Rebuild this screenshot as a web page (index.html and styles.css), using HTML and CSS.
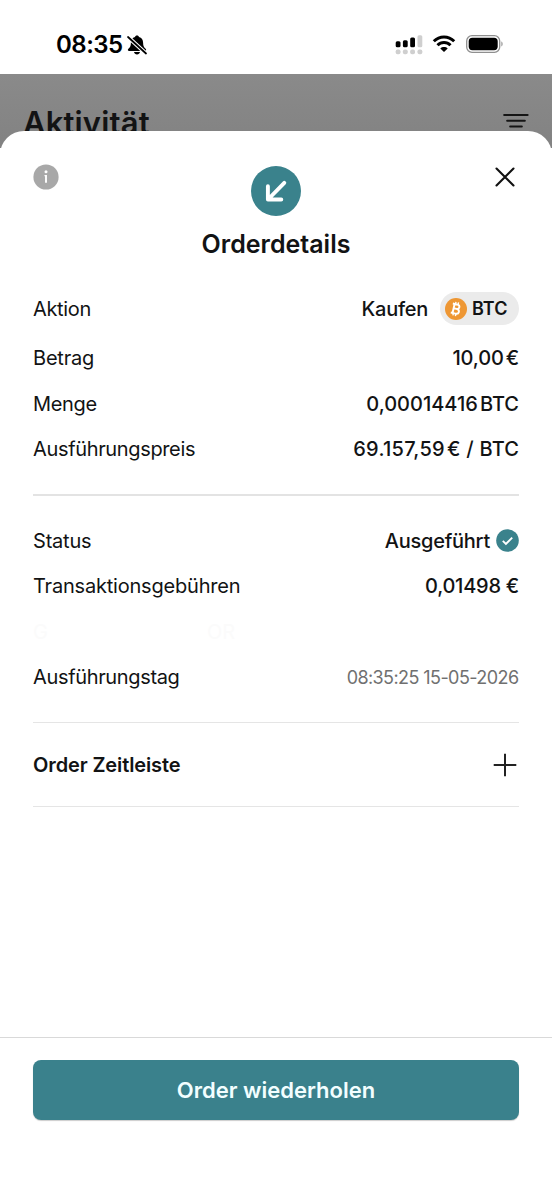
FILE: index.html
```html
<!DOCTYPE html>
<html lang="de">
<head>
<meta charset="utf-8">
<title>Orderdetails</title>
<link rel="stylesheet" href="styles.css">
</head>
<body>
<div class="phone">
  <header class="statusbar">
    <div class="clock">
      <span class="time">08:35</span>
      <svg class="bell" width="20" height="20" viewBox="0 0 20 20">
        <path d="M10 .4c-1.100 0-1.900.7-2 1.600C5.300 2.800 3.900 4.900 3.900 7.800c0 3.300-.9 4.600-2.500 6-1 .9-.6 2.200.8 2.200h15.600c1.400 0 1.800-1.300.8-2.200-1.600-1.400-2.500-2.700-2.500-6 0-2.900-1.400-5-4.100-5.800C11.900 1.100 11.100.4 10 .4z"/>
        <path d="M7 17h6c-.3 1.500-1.500 2.500-3 2.500S7.300 18.500 7 17z"/>
        <path class="bell-gap" d="M1 2l18 16.500"/>
        <path class="bell-slash" d="M1 2l18 16.500"/>
      </svg>
    </div>
    <div class="indicators">
      <svg width="28" height="20" viewBox="0 0 28 20">
        <rect x=".7" y="6.200" width="4.800" height="6" rx="1.500"/>
        <rect x="7.900" y="5.200" width="4.800" height="7" rx="1.500"/>
        <rect x="15.200" y="2.600" width="4.800" height="9.600" rx="1.500"/>
        <g fill="#cfcfcf"><rect x="22.500" y=".3" width="4.800" height="11.900" rx="1.500"/>
        <rect x=".7" y="14.500" width="4.800" height="4.800" rx="1.800"/><rect x="7.900" y="14.500" width="4.800" height="4.800" rx="1.800"/><rect x="15.200" y="14.500" width="4.800" height="4.800" rx="1.800"/><rect x="22.500" y="14.500" width="4.800" height="4.800" rx="1.800"/></g>
      </svg>
      <svg class="wifi" width="24" height="18" viewBox="0 0 24 18">
        <path class="wave" d="M1.800 6.300C7.600.5 16.400.5 22.200 6.300M5.500 10.200c3.700-3.700 9.300-3.700 13 0"/>
        <path d="M12 17l-3.700-3.500c2-1.900 5.400-1.900 7.400 0z"/>
      </svg>
      <svg class="battery" width="38" height="18" viewBox="0 0 38 18">
        <rect x=".7" y=".7" width="33" height="16.600" rx="5.300" fill="none" stroke="#8f8f8f" stroke-width="1.300"/>
        <rect x="2.700" y="2.700" width="29" height="12.600" rx="3.700"/>
        <path d="M35.400 6.600c1.600.6 1.600 4.200 0 4.800z" fill="#8f8f8f"/>
      </svg>
    </div>
  </header>

  <div class="backdrop">
    <h1 class="page-title">Aktivität</h1>
    <svg class="filter" width="26" height="16" viewBox="0 0 26 16"><path d="M1.200 2h23.400M4.200 7.700h17.600M7.200 13.500h11.600"/></svg>
  </div>

  <main class="sheet">
    <div class="sheet-head">
      <svg class="info" width="26" height="26" viewBox="0 0 26 26"><circle cx="13" cy="13" r="12.600" fill="#a8a8a8"/><circle cx="13" cy="7.800" r="1.500" fill="#fff"/><path d="M13 11v7.800" fill="none" stroke="#fff" stroke-width="1.900"/><path d="M11.500 11.600h1.500" fill="none" stroke="#fff" stroke-width="1.200"/></svg>
      <div class="heading">
        <svg width="50" height="50" viewBox="0 0 50 50"><circle cx="25" cy="25" r="25" fill="#3a828c"/><path d="M33.300 16.800L17.500 33M16.900 20.200v13.300h13.400" fill="none" stroke="#fff" stroke-width="3.900" stroke-linecap="round" stroke-linejoin="round"/></svg>
        <h2 class="title">Orderdetails</h2>
      </div>
      <svg class="close" width="20" height="20" viewBox="0 0 20 20"><path d="M1.500 1.500l17 17M18.500 1.500l-17 17"/></svg>
    </div>

    <section class="group">
      <div class="row row-action">
        <span class="label">Aktion</span>
        <div class="action"><span class="tight">Kaufen</span>
          <span class="chip">
            <svg width="22" height="22" viewBox="0 0 22 22"><circle cx="11" cy="11" r="11" fill="#ee9734"/><g transform="rotate(13 11 11)" fill="none" stroke="#fff"><path stroke-width="1.900" d="M8.500 6.400v9.200M6.700 6.400h4.700c3.300 0 3.300 4.400 0 4.400H8.600M11.400 10.800c4.100 0 4.100 4.800 0 4.800H6.700"/><path stroke-width="1.400" d="M9.400 4v2.500M12 4v2.500M9.400 15.500V18M12 15.500V18"/></g></svg>
            <span class="ticker">BTC</span>
          </span>
        </div>
      </div>
      <div class="row"><span class="label short">Betrag</span><span class="value amount">10,00<i class="thin"></i>€</span></div>
      <div class="row"><span class="label">Menge</span><span class="value">0,00014416<i class="thin"></i>BTC</span></div>
      <div class="row"><span class="label">Ausführungspreis</span><span class="value price">69.157,59<i class="thin"></i>€ / BTC</span></div>
    </section>

    <section class="group group-status">
      <div class="row"><span class="label short">Status</span>
        <div class="done"><span class="tight">Ausgeführt</span><svg width="23" height="23" viewBox="0 0 23 23"><circle cx="11.500" cy="11.500" r="11.300" fill="#3a828c"/><path d="M6.800 11.900l3.100 3 6.300-6.300" fill="none" stroke="#fff" stroke-width="1.900"/></svg></div>
      </div>
      <div class="row"><span class="label short">Transaktionsgebühren</span><span class="value fee">0,01498 €</span></div>
      <div class="row ghost"><span>G</span><span>OR</span></div>
      <div class="row"><span class="label">Ausführungstag</span><span class="date">08:35:25 15-05-2026</span></div>
    </section>

    <section class="timeline">
      <h3 class="timeline-title">Order Zeitleiste</h3>
      <svg class="plus" width="24" height="24" viewBox="0 0 24 24"><path d="M12 .7v22.600M.7 12h22.600"/></svg>
    </section>

    <footer class="footer"><button class="repeat"><span>Order wiederholen</span></button></footer>
  </main>
</div>
</body>
</html>
```
FILE: styles.css
```css
* { box-sizing: border-box; }
body { margin: 0; background: #fff; color: #121314; font-family: Inter, "Liberation Sans", sans-serif; font-size: 20px; }
h1, h2, h3 { margin: 0; }
svg { display: block; flex: none; }
.phone { width: 552px; height: 1200px; overflow: hidden; display: flex; flex-direction: column; }
.statusbar { height: 74px; flex: none; display: flex; justify-content: space-between; padding: 35px 48px 0 56px; color: #000; }
.clock { display: flex; gap: 4px; }
.time { font-size: 24px; line-height: 20px; font-weight: 600; letter-spacing: -0.5px; }
.bell-gap, .bell-slash { fill: none; stroke: #fff; stroke-width: 4; }
.bell-slash { stroke: #000; stroke-width: 1.7; stroke-linecap: round; }
.indicators { display: flex; }
.wifi { margin: 0 0 0 9px; }
.wave { fill: none; stroke: #000; stroke-width: 3; }
.battery { margin: 0 0 0 10px; }
.backdrop { height: 74px; flex: none; display: flex; justify-content: space-between; padding: 29px 23px 0 23px; background: linear-gradient(#8a8a8a, #828282); }
.page-title { font-size: 31px; line-height: 40px; font-weight: 600; letter-spacing: 0.15px; }
.filter { margin-top: 10px; fill: none; stroke: #151515; stroke-width: 2.1; stroke-linecap: round; }
.sheet { position: relative; margin-top: -17.5px; flex: 1; display: flex; flex-direction: column; padding: 0 33px; background: #fff; border-radius: 24px 24px 0 0; }
.sheet-head { height: 151.5px; display: flex; justify-content: space-between; padding-top: 33.5px; }
.heading { display: flex; flex-direction: column; align-items: center; gap: 12px; padding-top: 2px; }
.title { font-size: 25px; line-height: 32px; font-weight: 600; white-space: nowrap; }
.close { margin: 3px 4px 0 2px; fill: none; stroke: #111; stroke-width: 2.1; stroke-linecap: round; }
.group { padding-bottom: 22px; border-bottom: 2px solid #e3e3e3; }
.group-status { padding-top: 22px; border-bottom: 1px solid #e5e5e5; }
.row { height: 45.5px; display: flex; justify-content: space-between; align-items: center; white-space: nowrap; }
.row-action { height: 53.5px; }
.label { letter-spacing: -0.35px; }
.short { letter-spacing: -0.2px; }
.action { display: flex; align-items: center; gap: 12px; font-weight: 500; }
.tight { letter-spacing: -0.25px; }
.chip { width: 79px; height: 33px; display: flex; align-items: center; gap: 5px; padding-left: 5px; border-radius: 17px; background: #ebebeb; }
.ticker { font-size: 18px; font-weight: 600; }
.value { font-weight: 500; }
.fee { letter-spacing: -0.25px; }
.amount { letter-spacing: -0.15px; }
.price { letter-spacing: 0.25px; margin-right: -0.25px; }
.thin { display: inline-block; width: 2px; }
.done { display: flex; align-items: center; gap: 6px; font-weight: 500; }
.date { font-size: 18px; letter-spacing: -0.58px; margin-right: 0.5px; color: #707070; }
.ghost { justify-content: flex-start; gap: 159px; color: #fbfbfb; }
.timeline { height: 84px; display: flex; justify-content: space-between; align-items: center; border-bottom: 1px solid #e5e5e5; padding-right: 2px; }
.timeline-title { font-size: 20px; font-weight: 600; letter-spacing: -0.12px; }
.plus { fill: none; stroke: #222; stroke-width: 2; }
.footer { margin: auto -33px 0; height: 163px; padding: 22px 33px 0; border-top: 1px solid #d9d9d9; }
.repeat { width: 100%; height: 60px; border: 0; border-radius: 8px; background: #3a818c; color: #f2feff; font: 600 22px Inter, sans-serif; box-shadow: 0 1px 1px #0003; }
```
